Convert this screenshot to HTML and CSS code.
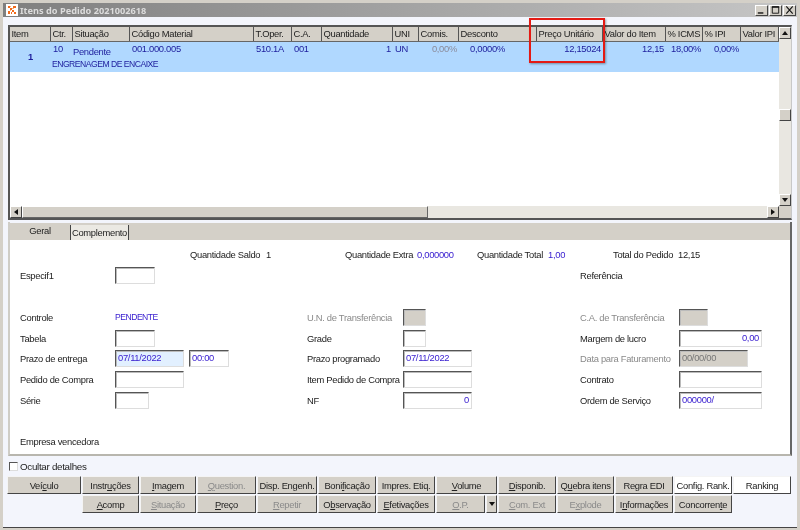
FILE: index.html
```html
<!DOCTYPE html>
<html lang="pt">
<head>
<meta charset="utf-8">
<title>Itens do Pedido 2021002618</title>
<link rel="stylesheet" href="styles.css">
</head>
<body>
<div class="window">
  <div class="titlebar">
    <svg class="app-icon" width="12" height="12" viewBox="0 0 12 12"><rect width="12" height="12" fill="#fff"/><path d="M2 2h2v2H2zM7 2h3v2H7zM4 4h2v2H4zM2 7h2v3H2zM6 6h2v2H6zM8 8h2v2H8zM5 8h1v2H5z" fill="#f26a1b"/><path d="M4 2h1v1H4zM6 4h2v1H6zM4 6h1v1H4z" fill="#f7b27f"/></svg>
    <span class="title-text">Itens do Pedido 2021002618</span>
    <div class="caption-buttons">
      <button class="caption-btn"><svg width="12" height="10" viewBox="0 0 12 10"><path d="M2 7.5h6v1.5H2z" fill="#111"/></svg></button>
      <button class="caption-btn"><svg width="12" height="10" viewBox="0 0 12 10"><path d="M2.5 1.5h7v7h-7z" fill="none" stroke="#111"/><path d="M2 1h8v1.5H2z" fill="#111"/></svg></button>
      <button class="caption-btn"><svg width="12" height="10" viewBox="0 0 12 10"><path d="M2.5 1l7 8M9.5 1l-7 8" stroke="#111" stroke-width="1.2"/></svg></button>
    </div>
  </div>

  <div class="grid-panel">
    <div class="grid-main">
      <div class="grid-head">
        <div class="hc">Item</div><div class="hc">Ctr.</div><div class="hc">Situação</div><div class="hc">Código Material</div><div class="hc">T.Oper.</div><div class="hc">C.A.</div><div class="hc">Quantidade</div><div class="hc">UNI</div><div class="hc">Comis.</div><div class="hc">Desconto</div><div class="hc">Preço Unitário</div><div class="hc">Valor do Item</div><div class="hc">% ICMS</div><div class="hc">% IPI</div><div class="hc">Valor IPI</div>
      </div>
      <div class="grid-row">
        <div class="dc item-no">1</div>
        <div class="dc">10</div>
        <div class="dc sit">Pendente</div>
        <div class="dc">001.000.005</div>
        <div class="dc">510.1A</div>
        <div class="dc">001</div>
        <div class="dc num">1</div>
        <div class="dc">UN</div>
        <div class="dc num muted">0,00%</div>
        <div class="dc num desc">0,0000%</div>
        <div class="dc num">12,15024</div>
        <div class="dc num">12,15</div>
        <div class="dc num">18,00%</div>
        <div class="dc num">0,00%</div>
        <div class="dc"></div>
        <div class="dc second">ENGRENAGEM DE ENCAIXE</div>
      </div>
      <div class="grid-empty"></div>
      <div class="hscroll">
        <div class="sb-btn"><i class="arrow left"></i></div>
        <div class="sb-thumb"></div>
        <div class="sb-track"></div>
        <div class="sb-btn"><i class="arrow right"></i></div>
      </div>
    </div>
    <div class="vscroll">
      <div class="sb-btn"><i class="arrow up"></i></div>
      <div class="v-track-a"></div>
      <div class="sb-btn thumb-v"></div>
      <div class="v-track-b"></div>
      <div class="sb-btn"><i class="arrow down"></i></div>
      <div class="corner"></div>
    </div>
  </div>

  <div class="details">
    <div class="tabs">
      <div class="tab active">Geral</div>
      <div class="tab other">Complemento</div>
    </div>
    <div class="details-body">
      <div class="summary">
        <span>Quantidade Saldo</span><span>1</span>
        <span>Quantidade Extra</span><span class="val">0,000000</span>
        <span>Quantidade Total</span><span class="val">1,00</span>
        <span>Total do Pedido</span><span>12,15</span>
      </div>
      <div class="form">
        <div class="row"><label>Especif1</label><div class="field w40"></div><i></i><i></i><label>Referência</label></div>
        <div class="row"></div>
        <div class="row"><label>Controle</label><span class="val caps">PENDENTE</span><label class="off">U.N. de Transferência</label><div class="field w23 dis"></div><label class="off">C.A. de Transferência</label><div class="field w29 dis"></div></div>
        <div class="row"><label>Tabela</label><div class="field w40"></div><label>Grade</label><div class="field w23"></div><label>Margem de lucro</label><div class="field w83 right">0,00</div></div>
        <div class="row"><label>Prazo de entrega</label><div class="pair"><div class="field w69 focus">07/11/2022</div><div class="field w40">00:00</div></div><label>Prazo programado</label><div class="field w69">07/11/2022</div><label class="off">Data para Faturamento</label><div class="field w69 dis">00/00/00</div></div>
        <div class="row"><label>Pedido de Compra</label><div class="field w69"></div><label>Item Pedido de Compra</label><div class="field w69"></div><label>Contrato</label><div class="field w83"></div></div>
        <div class="row"><label>Série</label><div class="field w34"></div><label>NF</label><div class="field w69 right">0</div><label>Ordem de Serviço</label><div class="field w83">000000/</div></div>
        <div class="row"></div>
        <div class="row"><label class="wide">Empresa vencedora</label></div>
      </div>
    </div>
  </div>

  <div class="check-row"><span class="checkbox"></span><span>Ocultar detalhes</span></div>

  <div class="buttons">
    <button class="btn">Veí<u>c</u>ulo</button>
    <button class="btn">Instr<u>u</u>ções</button>
    <button class="btn"><u>I</u>magem</button>
    <button class="btn off"><u>Q</u>uestion.</button>
    <button class="btn">Disp. Engenh.</button>
    <button class="btn">Boni<u>f</u>icação</button>
    <button class="btn">Impres. Etiq.</button>
    <button class="btn"><u>V</u>olume</button>
    <button class="btn"><u>D</u>isponib.</button>
    <button class="btn">Q<u>u</u>ebra itens</button>
    <button class="btn">Regra EDI</button>
    <button class="btn white">Config. Rank.</button>
    <button class="btn white">Ranking</button>

    <button class="btn start2"><u>A</u>comp</button>
    <button class="btn off"><u>S</u>ituação</button>
    <button class="btn"><u>P</u>reço</button>
    <button class="btn off"><u>R</u>epetir</button>
    <button class="btn">O<u>b</u>servação</button>
    <button class="btn"><u>E</u>fetivações</button>
    <div class="split"><button class="btn off"><u>O</u>.P.</button><button class="btn drop"><i class="arrow down"></i></button></div>
    <button class="btn off"><u>C</u>om. Ext</button>
    <button class="btn off">E<u>x</u>plode</button>
    <button class="btn">I<u>n</u>formações</button>
    <button class="btn">Concorren<u>t</u>e</button>
  </div>

  <div class="callout"></div>
</div>
</body>
</html>
```
FILE: styles.css
```css
* { box-sizing: border-box; }
html, body { margin: 0; padding: 0; }
body { width: 800px; height: 530px; overflow: hidden; font-family: "Liberation Sans", "Noto Sans", sans-serif; font-size: 9.4px; letter-spacing: -.3px; color: #222; }
button { font: inherit; letter-spacing: inherit; color: inherit; margin: 0; padding: 0; }

.window {
  --cols: 41px 22px 57px 124px 38px 30px 71px 26px 40px 78px 66px 63px 37px 38px 38px;
  position: relative;
  width: 800px;
  height: 530px;
  background: #f3f5fc;
  border: 3px solid #d4d0c8;
  border-bottom-width: 2px;
  box-shadow: inset 0 -1px #444;
  display: flex;
  flex-direction: column;
  filter: blur(0.35px);
}

.titlebar {
  flex: none;
  height: 14px;
  display: flex;
  align-items: center;
  background: linear-gradient(90deg, #7f7f7f, #c6c6c6);
  padding-left: 3px;
}
.app-icon { flex: none; }
.title-text { margin-left: 2px; font-family: "Noto Sans", sans-serif; font-weight: 700; font-size: 9.2px; color: #dcdcdc; letter-spacing: 0; }
.caption-buttons { margin-left: auto; display: flex; gap: 1px; padding-right: 1px; }
.caption-btn { width: 13px; height: 11px; display: flex; align-items: center; justify-content: center; background: #d4d0c8; border: 1px solid; border-color: #fff #444 #444 #fff; }

.grid-panel {
  flex: none;
  height: 195px;
  margin: 8px 5px 0;
  display: flex;
  border: 2px solid #555;
  border-right: 1px solid #c8c8c8;
  background: #fff;
}
.grid-main { width: 769px; flex: none; display: flex; flex-direction: column; }
.grid-head { flex: none; display: grid; grid-template-columns: var(--cols); height: 15px; background: #d4d0c8; border-bottom: 1px solid #666; }
.hc { padding-left: 1.5px; line-height: 14px; border-right: 1px solid #555; white-space: nowrap; overflow: hidden; }
.grid-row { flex: none; height: 30px; display: grid; grid-template-columns: var(--cols); grid-template-rows: 15px 15px; background: #b0d8ff; color: #1c1c9c; }
.dc { line-height: 13px; padding-left: 2px; white-space: nowrap; }
.item-no { grid-row: 1 / 3; padding: 0; text-align: center; font-weight: 700; line-height: 30px; }
.sit { padding: 3px 0 0 0; }
.num { text-align: right; padding: 0 2px 0 0; }
.muted { color: #8a8a9a; }
.desc { padding-right: 32px; }
.second { grid-column: 2 / -1; padding-left: 1px; line-height: 14px; font-size: 8.6px; letter-spacing: -.5px; }
.grid-empty { flex: 1; }

.hscroll { flex: none; height: 12px; display: flex; background: #e9e7e1; }
.sb-btn { flex: none; width: 12px; height: 12px; display: flex; align-items: center; justify-content: center; background: #d4d0c8; border: 1px solid; border-color: #fff #444 #444 #fff; }
.sb-thumb { flex: none; width: 406px; height: 12px; background: #d4d0c8; border: 1px solid; border-color: #fff #666 #666 #fff; }
.sb-track { flex: 1; }
.arrow { display: block; width: 0; height: 0; border: 3px solid transparent; }
.arrow.up { border-top: 0; border-bottom: 4px solid #111; }
.arrow.down { border-bottom: 0; border-top: 4px solid #111; }
.arrow.left { border-left: 0; border-right: 4px solid #111; }
.arrow.right { border-right: 0; border-left: 4px solid #111; }

.vscroll { width: 12px; flex: none; display: flex; flex-direction: column; background: #e9e7e1; }
.v-track-a { flex: none; height: 70px; }
.v-track-b { flex: 1; }
.corner { flex: none; height: 12px; background: #d4d0c8; }

.details {
  flex: none;
  height: 234px;
  margin: 2px 5px 0;
  background: #fff;
  border-left: 2px solid #cfcdc7;
  border-right: 2px solid #666;
  border-bottom: 2px solid #b8b6ae;
  display: flex;
  flex-direction: column;
}
.tabs { flex: none; height: 18px; background: #d4d0c8; display: flex; border-top: 1px solid #f3f5fc; }
.tab { line-height: 15px; }
.tab.active { width: 60px; text-align: center; }
.tab.other { width: 59px; margin-top: 2px; text-align: center; background: #ebe9e3; border-left: 1px solid #444; border-right: 1px solid #444; line-height: 15px; }
.details-body { flex: 1; padding: 8px 0 0 10px; }
.summary { height: 14px; line-height: 14px; display: grid; grid-template-columns: 76px 79px 72px 60px 71px 65px 65px 40px; margin-left: 170px; white-space: nowrap; }
.summary span { display: block; }
.val { color: #3a20d0; }
.caps { font-size: 8.6px; letter-spacing: -.5px; }
.form { margin-top: 3.6px; }
.row { height: 20.75px; display: grid; grid-template-columns: 95px 192px 96px 177px 99px 83px; align-items: center; }
.row label { white-space: nowrap; }
.row label.off { color: #8a8a8a; }
.field { height: 17px; background: #fff; border: 1px solid; border-color: #555 #ddd #ddd #555; box-shadow: inset 1px 1px #bbb; color: #3a20d0; line-height: 14px; padding-left: 2px; white-space: nowrap; }
.field.right { text-align: right; padding: 0 2px 0 0; }
.field.focus { background: #e2f0ff; }
.field.dis { background: #d4d0c8; color: #777; }
.w23 { width: 23px; } .w29 { width: 29px; } .w34 { width: 34px; } .w40 { width: 40px; } .w69 { width: 69px; } .w83 { width: 83px; }
.pair { display: flex; gap: 5px; }

.check-row { flex: none; height: 15px; margin: 3px 0 0 6px; display: flex; align-items: center; gap: 2px; font-size: 9.8px; }
.checkbox { width: 9px; height: 9px; background: #fff; border: 1px solid; border-color: #555 #ddd #ddd #555; }

.buttons { flex: none; margin: 2px 0 0 4px; display: grid; grid-template-columns: 75px 58px 57px 60px 61px 59px 59px 62px 59px 58px 59px 59px 59px; grid-template-rows: 19px 19px; }
.btn { height: 18px; margin-right: 1px; background: #d4d0c8; border: 1px solid; border-color: #f4f4f4 #444 #444 #f4f4f4; white-space: nowrap; overflow: hidden; }
.btn.off { color: #8a8a8a; }
.btn.white { background: #fff; }
.start2 { grid-column-start: 2; }
.split { display: flex; margin-right: 1px; }
.split .btn:first-child { flex: 1; }
.drop { width: 11px; margin-right: 0; display: flex; align-items: center; justify-content: center; }

.callout { position: absolute; left: 526px; top: 15px; width: 76px; height: 45px; border: 2px solid #e41a14; box-shadow: 1px 1px 2px rgba(0,0,0,.35); }
```
